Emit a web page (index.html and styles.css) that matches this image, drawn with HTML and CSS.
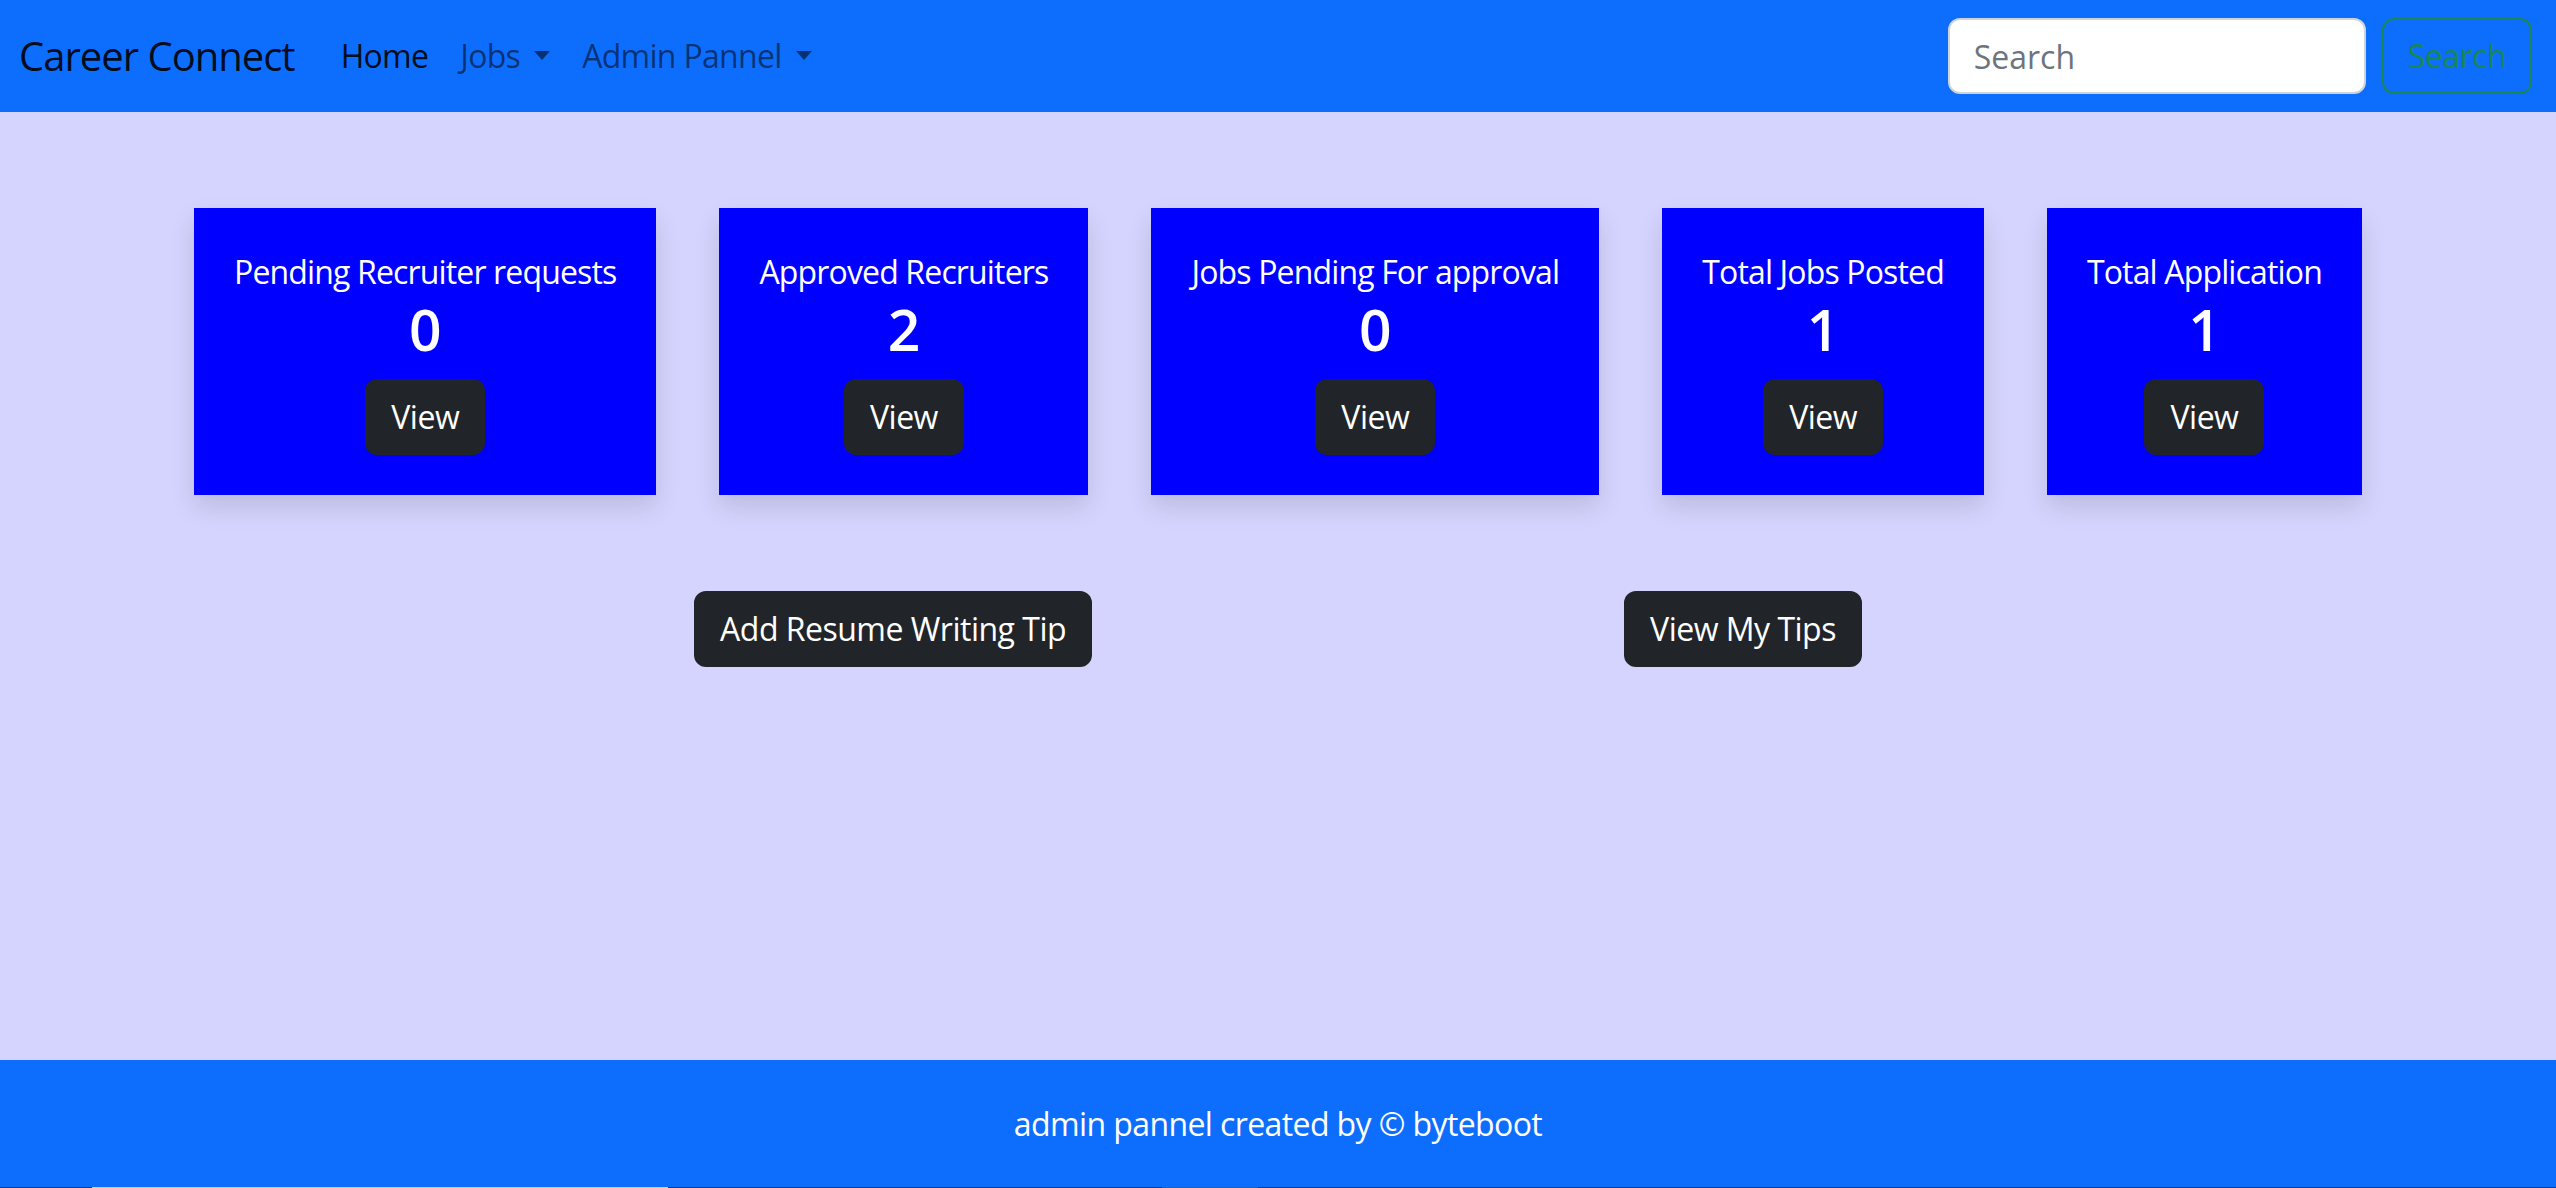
FILE: index.html
```html
<!DOCTYPE html>
<html lang="en">
<head>
<meta charset="utf-8">
<title>Career Connect - Admin</title>
<link rel="stylesheet" href="styles.css">
</head>
<body>
<div class="page">
  <nav class="navbar">
    <div class="nav-left">
      <a class="brand" href="#">Career Connect</a>
      <ul class="nav-links">
        <li><a class="nav-link active" href="#">Home</a></li>
        <li><a class="nav-link dropdown" href="#">Jobs</a></li>
        <li><a class="nav-link dropdown" href="#">Admin Pannel</a></li>
      </ul>
    </div>
    <form class="search-form">
      <input class="search-input" type="search" placeholder="Search">
      <button class="search-btn" type="button">Search</button>
    </form>
  </nav>

  <main class="main">
    <div class="cards">
      <div class="card">
        <h5 class="card-title">Pending Recruiter requests</h5>
        <h3 class="card-num">0</h3>
        <a class="btn-dark" href="#">View</a>
      </div>
      <div class="card">
        <h5 class="card-title">Approved Recruiters</h5>
        <h3 class="card-num">2</h3>
        <a class="btn-dark" href="#">View</a>
      </div>
      <div class="card">
        <h5 class="card-title">Jobs Pending For approval</h5>
        <h3 class="card-num">0</h3>
        <a class="btn-dark" href="#">View</a>
      </div>
      <div class="card">
        <h5 class="card-title">Total Jobs Posted</h5>
        <h3 class="card-num">1</h3>
        <a class="btn-dark" href="#">View</a>
      </div>
      <div class="card">
        <h5 class="card-title">Total Application</h5>
        <h3 class="card-num">1</h3>
        <a class="btn-dark" href="#">View</a>
      </div>
    </div>
    <div class="actions">
      <a class="btn-dark" href="#">Add Resume Writing Tip</a>
      <a class="btn-dark" href="#">View My Tips</a>
    </div>
  </main>

  <footer class="footer">
    <p class="footer-text">admin pannel created by &copy; byteboot</p>
  </footer>
  <div class="bottom-strip">
    <span class="strip-seg seg-a"></span>
    <span class="strip-seg seg-b"></span>
  </div>
</div>
</body>
</html>
```

FILE: styles.css
```css
* { box-sizing: border-box; }

html, body {
  margin: 0;
  padding: 0;
}

body {
  font-family: "Open Sans", "Noto Sans", "Liberation Sans", sans-serif;
  font-size: 32px;
  line-height: 1.5;
  color: #212529;
  background: #d5d4fe;
}

.page {
  height: 1188px;
  display: flex;
  flex-direction: column;
  overflow: hidden;
}

/* ---------- navbar ---------- */
.navbar {
  height: 112px;
  flex: 0 0 112px;
  background: #0d6efd;
  display: flex;
  align-items: center;
  justify-content: space-between;
  padding: 0 24px 0 19px;
}

.nav-left {
  display: flex;
  align-items: center;
}

.brand {
  font-size: 40px;
  line-height: 60px;
  color: rgba(0, 0, 0, 0.9);
  text-decoration: none;
  margin-right: 30px;
  letter-spacing: -1px;
}

.nav-links {
  list-style: none;
  margin: 0;
  padding: 0;
  display: flex;
}

.nav-link {
  display: block;
  padding: 16px 16px;
  line-height: 48px;
  color: rgba(0, 0, 0, 0.55);
  text-decoration: none;
  letter-spacing: -0.7px;
}

.nav-link.active {
  color: rgba(0, 0, 0, 0.9);
}

.nav-link.dropdown::after {
  content: "";
  display: inline-block;
  margin-left: 14px;
  vertical-align: 8px;
  border-top: 9px solid rgba(0, 0, 0, 0.55);
  border-left: 8px solid transparent;
  border-right: 8px solid transparent;
  border-bottom: 0;
}

.search-form {
  display: flex;
  align-items: center;
  gap: 16px;
}

.search-input {
  width: 418px;
  height: 76px;
  padding: 12px 24px;
  font-family: inherit;
  font-size: 32px;
  color: #212529;
  background: #fff;
  border: 2px solid #ced4da;
  border-radius: 12px;
  outline: none;
}

.search-input::placeholder {
  color: #6c757d;
}

.search-btn {
  height: 76px;
  padding: 12px 24px;
  font-family: inherit;
  font-size: 32px;
  line-height: 48px;
  color: #198754;
  background: transparent;
  border: 2px solid #198754;
  border-radius: 12px;
  letter-spacing: -0.5px;
}

/* ---------- main ---------- */
.main {
  flex: 1 1 auto;
  padding-top: 96px;
  background: #d5d4fe;
}

.cards {
  display: flex;
  justify-content: center;
  gap: 63px;
}

.card {
  background: #0000ff;
  color: #fff;
  padding: 40px 40px;
  display: flex;
  flex-direction: column;
  align-items: center;
  text-align: center;
  box-shadow: 0 12px 24px rgba(0, 0, 0, 0.12);
}

.card-title {
  margin: 0;
  font-size: 32px;
  font-weight: 400;
  line-height: 48px;
  letter-spacing: -0.85px;
  white-space: nowrap;
}

.card-num {
  margin: 0 0 16px;
  font-size: 57px;
  font-weight: 600;
  line-height: 67px;
}

.btn-dark {
  display: inline-block;
  height: 76px;
  padding: 12px 24px;
  line-height: 48px;
  font-size: 32px;
  color: #fff;
  background: #212529;
  border: 2px solid #212529;
  border-radius: 12px;
  text-decoration: none;
  white-space: nowrap;
  letter-spacing: -0.5px;
}

.actions {
  margin-top: 96px;
  display: flex;
  justify-content: center;
  gap: 532px;
}

/* ---------- footer ---------- */
.footer {
  flex: 0 0 127px;
  background: #0d6efd;
  display: flex;
  align-items: center;
  justify-content: center;
}

.footer-text {
  margin: 0;
  color: #fff;
  font-size: 32px;
  line-height: 48px;
  letter-spacing: -0.6px;
}

.bottom-strip {
  flex: 0 0 1px;
  height: 1px;
  background: #1c3a52;
  position: relative;
}

.strip-seg {
  position: absolute;
  top: 0;
  height: 1px;
}

.seg-a {
  left: 92px;
  width: 576px;
  background: #c9ccd2;
}

.seg-b {
  left: 1162px;
  width: 96px;
  background: #4a5a68;
}
```
